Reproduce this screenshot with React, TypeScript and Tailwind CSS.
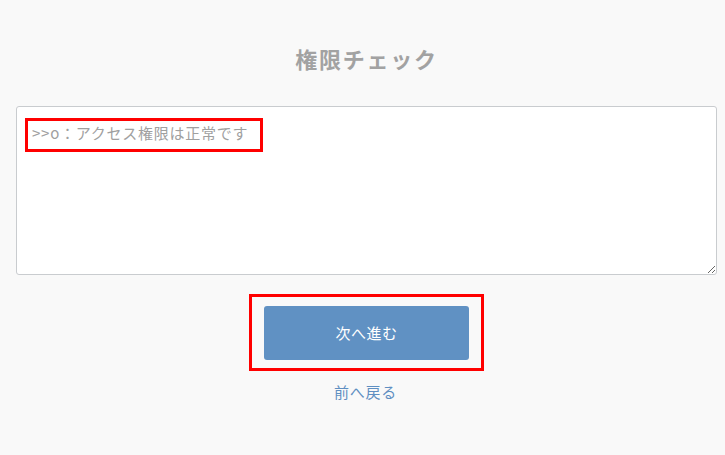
import React from 'react';

const jp = { fontFamily: '"Noto Sans CJK JP", "Noto Sans", sans-serif' };

export default function App() {
    return (
        <div className="min-h-screen w-full bg-[#f9f9f9] pt-[42px]" style={jp}>
            <h1 className="pl-[8px] text-center text-[22px] leading-[32px] font-bold tracking-[0.08em] text-[#a2a2a2]">
                権限チェック
            </h1>

            <div className="relative mt-[32px] ml-4 w-[701px]">
                <textarea
                    className="block h-[169px] w-full resize rounded-[3px] border border-[#c9cccf] bg-white px-[15px] py-[16px] text-[15px] leading-[20px] tracking-[0.05em] text-[#a0a0a0] outline-none"
                    defaultValue=">>o：アクセス権限は正常です"
                />
                {/* highlight overlay */}
                <div className="pointer-events-none absolute left-[9px] top-[12px] h-[34px] w-[238px] border-[3px] border-[#ff0000]" />
            </div>

            <div className="mt-[19px] flex justify-center">
                <div className="ml-[8px] border-[3px] border-[#ff0000] px-3 pt-[9px] pb-[8px]">
                    <button
                        type="button"
                        className="flex h-[54px] w-[205px] items-center justify-center rounded-[3px] bg-[#6091c3] text-[15px] tracking-[0.03em] text-white"
                    >
                        次へ進む
                    </button>
                </div>
            </div>

            <div className="mt-[11px] flex justify-center">
                <a href="#" className="pl-[6px] text-[15px] leading-[20px] tracking-[0.05em] text-[#5f8fc2]">
                    前へ戻る
                </a>
            </div>
        </div>
    );
}
